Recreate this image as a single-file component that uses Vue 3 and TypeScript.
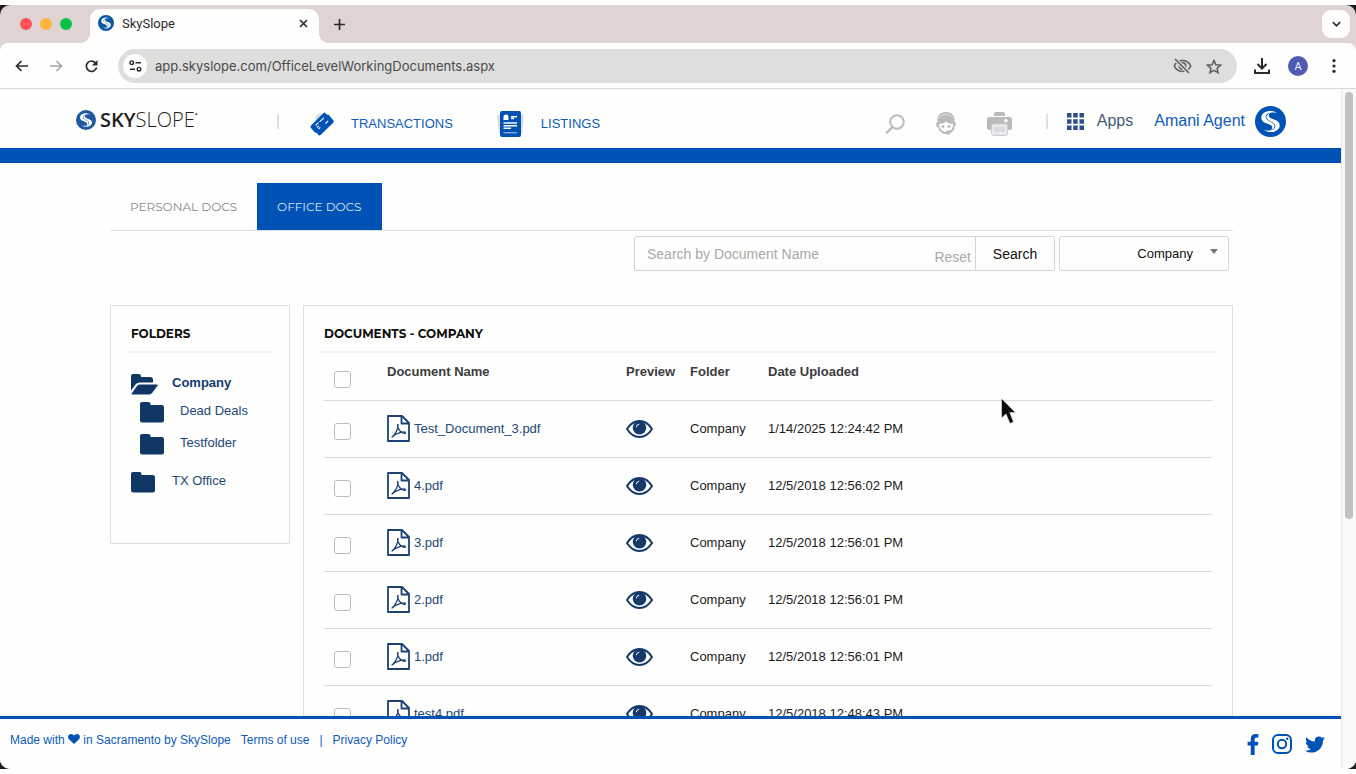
<script setup lang="ts">
import { ref } from 'vue'

interface DocumentRow {
  name: string
  folder: string
  uploaded: string
}

interface Folder {
  name: string
  open?: boolean
  nested?: boolean
}

const address = ref('app.skyslope.com/OfficeLevelWorkingDocuments.aspx')
const query = ref('')
const scope = ref('Company')

const folders: Folder[] = [
  { name: 'Company', open: true },
  { name: 'Dead Deals', nested: true },
  { name: 'Testfolder', nested: true },
  { name: 'TX Office' },
]

const documents: DocumentRow[] = [
  { name: 'Test_Document_3.pdf', folder: 'Company', uploaded: '1/14/2025 12:24:42 PM' },
  { name: '4.pdf', folder: 'Company', uploaded: '12/5/2018 12:56:02 PM' },
  { name: '3.pdf', folder: 'Company', uploaded: '12/5/2018 12:56:01 PM' },
  { name: '2.pdf', folder: 'Company', uploaded: '12/5/2018 12:56:01 PM' },
  { name: '1.pdf', folder: 'Company', uploaded: '12/5/2018 12:56:01 PM' },
  { name: 'test4.pdf', folder: 'Company', uploaded: '12/5/2018 12:48:43 PM' },
]
</script>

<template>
  <svg class="defs" aria-hidden="true">
    <symbol id="brand" viewBox="0 0 32 32">
      <circle cx="16" cy="16" r="16" />
      <g fill="#fefefd">
        <path id="swoosh" d="M23 7C15.500 3 6.500 6 6.500 12C6.500 17.500 13 17.500 16.500 19.800C18.500 21.200 18 23 16.500 24.800C20.500 23 21.500 19.800 18.500 17.800C15 15.400 11 14.600 11 11.200C11 7.400 17 5.800 23 7Z" />
        <use href="#swoosh" transform="rotate(180 16 16)" />
      </g>
    </symbol>
    <symbol id="folder" viewBox="0 0 24 21">
      <path d="M2 0H8.500Q10.500 0 10.500 2V3H21.500Q24 3 24 5.500V18Q24 20.500 21.500 20.500H2.500Q0 20.500 0 18V2Q0 0 2 0Z" />
    </symbol>
    <symbol id="folder-open" viewBox="0 0 27 21">
      <path d="M2 0H7.500Q10 0 10 2V3H19Q22 3 22 6V8.500H9Q6 8.500 4.500 10.500L0 16.500V2Q0 0 2 0Z" />
      <path d="M8.500 10.500H26Q27.300 10.500 26.500 11.800L21.500 18.500Q20 20.500 18 20.500H1.500Q0 20.500 1 19L6 12Q7 10.500 8.500 10.500Z" />
    </symbol>
    <symbol id="pdf" viewBox="0 0 23 27">
      <path d="M1 1H15L22 8V26H1ZM14.500 1V8.500H22" fill="none" stroke="currentColor" stroke-width="1.800" stroke-linejoin="round" />
      <path d="M5 22C8 20 11.500 13.500 11 9.500C10 9.500 10.500 15 15 17.500C17 18.600 18.500 18.600 18.500 17.800C18 16 9 17.500 5 22Z" fill="none" stroke="currentColor" stroke-width="1.300" stroke-linejoin="round" />
    </symbol>
    <symbol id="eye" viewBox="0 0 27 18">
      <path d="M1 9Q6 1 13.500 1T26 9Q21 17 13.500 17T1 9Z" fill="none" stroke="currentColor" stroke-width="2" />
      <circle cx="13.500" cy="7.800" r="6.800" />
      <path d="M10.300 6.800Q10.600 4.600 12.800 4.300" fill="none" stroke="#fefefd" stroke-width="1" stroke-linecap="round" />
    </symbol>
  </svg>

  <div class="desktop">
    <div class="window">
      <div class="tabstrip">
        <div class="lights"><i class="red"></i><i class="amber"></i><i class="green"></i></div>
        <div class="browser-tab">
          <svg class="favicon"><use href="#brand" /></svg>
          <span>SkySlope</span>
          <button class="bare close" aria-label="Close tab">
            <svg width="9" height="9" viewBox="0 0 9 9"><path d="M1 1L8 8M8 1L1 8" stroke="#2c2c2c" stroke-width="1.700" /></svg>
          </button>
        </div>
        <button class="bare new-tab" aria-label="New tab">
          <svg width="11" height="11" viewBox="0 0 11 11"><path d="M5.500 0V11M0 5.500H11" stroke="#2c2c2c" stroke-width="1.700" /></svg>
        </button>
        <button class="tab-search" aria-label="Search tabs">
          <svg width="9" height="6" viewBox="0 0 10 6"><path d="M1 1L5 5L9 1" fill="none" stroke="#2c2c2c" stroke-width="1.900" /></svg>
        </button>
      </div>

      <div class="toolbar">
        <button class="bare" aria-label="Back">
          <svg width="13" height="12" viewBox="0 0 13 12"><path d="M13 6H1.500M6.500 1L1.500 6L6.500 11" fill="none" stroke="#2c2c2c" stroke-width="1.700" /></svg>
        </button>
        <button class="bare" aria-label="Forward">
          <svg width="13" height="12" viewBox="0 0 13 12"><path d="M0 6H11.500M6.500 1L11.500 6L6.500 11" fill="none" stroke="#a3a3a3" stroke-width="1.500" /></svg>
        </button>
        <button class="bare" aria-label="Reload">
          <svg width="13" height="13" viewBox="0 0 13 13"><path d="M11 3.500A5.200 5.200 0 1 0 11.600 7.500" fill="none" stroke="#2c2c2c" stroke-width="1.700" /><path d="M12.500 0V5.500H7Z" fill="#2c2c2c" /></svg>
        </button>
        <div class="omnibox">
          <button class="site-info" aria-label="Site information">
            <svg width="13" height="12" viewBox="0 0 13 12" fill="none" stroke="#2c2c2c" stroke-width="1.400"><circle cx="2.700" cy="2.700" r="1.800" /><path d="M6.500 2.700H12M1 9.200H6" /><circle cx="10" cy="9.200" r="1.800" /></svg>
          </button>
          <input v-model="address" class="address" type="text" aria-label="Address" />
          <button class="bare" aria-label="Tracking protection">
            <svg width="19" height="16" viewBox="0 0 19 16" fill="none" stroke="#5c5c5c" stroke-width="1.600"><path d="M1.200 8Q4 2.500 9.500 2.500T17.800 8Q15 13.500 9.500 13.500T1.200 8Z" /><circle cx="9.500" cy="8" r="3.200" /><path d="M2 1L16 15" stroke="#dededd" stroke-width="4" /><path d="M2 1L16 15" /></svg>
          </button>
          <button class="bare" aria-label="Bookmark this tab">
            <svg width="16" height="15" viewBox="0 0 16 15"><path d="M8 1.500L9.900 5.700L14.500 6.200L11.100 9.200L12 13.700L8 11.400L4 13.700L4.900 9.200L1.500 6.200L6.100 5.700Z" fill="none" stroke="#5c5c5c" stroke-width="1.500" /></svg>
          </button>
        </div>
        <button class="bare" aria-label="Downloads">
          <svg width="16" height="16" viewBox="0 0 16 16" fill="none" stroke="#2c2c2c" stroke-width="2"><path d="M8 0V10M3.500 6L8 10.500L12.500 6M1 11.500V15H15V11.500" /></svg>
        </button>
        <button class="profile">A</button>
        <button class="bare" aria-label="Menu">
          <svg width="4" height="14" viewBox="0 0 4 14" fill="#2c2c2c"><circle cx="2" cy="1.700" r="1.600" /><circle cx="2" cy="7" r="1.600" /><circle cx="2" cy="12.300" r="1.600" /></svg>
        </button>
      </div>

      <div class="viewport">
        <div class="page">
          <header class="site-header">
            <a class="logo" href="#"><svg><use href="#brand" /></svg><b>SKY</b><span>SLOPE</span><sup>•</sup></a>
            <span class="divider"></span>
            <nav class="nav">
              <a href="#">
                <svg width="24" height="24" viewBox="0 0 24 24"><path d="M5 6Q8 0 12 2L18 5L8 14Z" fill="#d8dce2" /><path d="M13.500 1Q14.500 0 15.500 1.500Q16.800 3 18.500 2.500L23 8Q24.500 9.500 23 11L10.500 23Q9 24 8 22.500Q7.500 20.500 5 20.500L1 16Q0 14.500 1 13.500Z" fill="#0052b5" /><path d="M5.500 13.500L8.500 10.700M9.500 9.800L14 5.800M7 15.500L8.800 13.800M8.500 17L10.200 15.400M15.500 11.500L18.200 8.800" stroke="#fefefd" stroke-width="1.100" /></svg>
                TRANSACTIONS
              </a>
              <a href="#">
                <svg width="27" height="26" viewBox="0 0 27 26"><path d="M0 4L5 3V22L2 22ZM27 4L22 3V22L25 22Z" fill="#d9dbdf" /><rect x="3" width="21" height="26" rx="2" fill="#0052b5" /><path d="M6.500 9V5.500Q6.500 3.500 9 3.500T11.500 5.500V9Z" fill="#fefefd" /><path d="M14 5.800H20M14 7.500H17" stroke="#fefefd" stroke-width="1.400" /><path d="M6.500 12H20M6.500 14.800H20M6.500 17.300H14" stroke="#fefefd" stroke-width="1.600" /><path d="M6.500 21.800H20" stroke="#7ea8dc" stroke-width="1.500" /></svg>
                LISTINGS
              </a>
            </nav>
            <div class="tools">
              <button class="bare" aria-label="Search">
                <svg width="20" height="20" viewBox="0 0 20 20" fill="none" stroke="#b9bbbc" stroke-width="2"><circle cx="12" cy="8" r="6.800" /><path d="M7.500 13L1 19.300" stroke-width="2.400" /></svg>
              </button>
              <button class="bare" aria-label="Support">
                <svg width="22" height="23" viewBox="0 0 22 23"><path d="M2.500 10C1.500 3 6 0 11 0S20.500 3 19.500 10Q21 10 21 12T19 15Q18 20 12 22H9Q4 20 3 15Q1 15 1 12.500T2.500 10Z" fill="#b9bbbc" /><path d="M4 12Q9 11.500 11 9.500Q13 11.500 18 12Q18.500 17 14 19.300Q11 21 8 19.300Q4 17 4 12Z" fill="#fefefd" /><path d="M3 6.500Q6 2.500 11 2.500T19 6.500" fill="none" stroke="#dcdddf" /><circle cx="8" cy="14.500" r="1.400" fill="#b9bbbc" /><circle cx="14" cy="14.500" r="1.400" fill="#b9bbbc" /><path d="M19 15Q18 20.500 12.500 20.500" fill="none" stroke="#b9bbbc" stroke-width="1.500" /><rect x="10.500" y="18.500" width="5" height="4" rx="2" fill="#b9bbbc" /></svg>
              </button>
              <button class="bare" aria-label="Print">
                <svg width="25" height="24" viewBox="0 0 25 24"><path d="M7 4V2Q7 0 9 0H16Q18 0 18 2V4Z" fill="#b9bbbc" /><rect y="5" width="25" height="13" rx="2.500" fill="#b9bbbc" /><rect x="4.500" y="12" width="16" height="11.500" rx="2" fill="#e9eaec" stroke="#c9cbcc" /><path d="M7 15H18V20H7Z" fill="#d9dadd" /><circle cx="19" cy="8.800" r="1.700" fill="#fefefd" /></svg>
              </button>
            </div>
            <span class="divider"></span>
            <a class="apps" href="#">
              <svg width="17" height="17" viewBox="0 0 17 17" fill="#2c4f85"><path d="M0 0h4.500v4.500H0zM6.200 0h4.500v4.500H6.200zM12.500 0H17v4.500h-4.500zM0 6.200h4.500v4.500H0zM6.200 6.200h4.500v4.500H6.200zM12.500 6.200H17v4.500h-4.500zM0 12.500h4.500V17H0zM6.200 12.500h4.500V17H6.200zM12.500 12.500H17V17h-4.500z" /></svg>
              Apps
            </a>
            <a class="user" href="#">Amani Agent<svg><use href="#brand" /></svg></a>
          </header>
          <div class="band"></div>

          <main class="content">
            <nav class="tabs">
              <a href="#">PERSONAL DOCS</a>
              <a class="active" href="#">OFFICE DOCS</a>
            </nav>

            <form class="filters" @submit.prevent>
              <div class="search">
                <input v-model="query" type="text" placeholder="Search by Document Name" aria-label="Search by Document Name" />
                <button class="reset" type="reset">Reset</button>
                <button class="go" type="submit">Search</button>
              </div>
              <div class="select">
                <select v-model="scope" aria-label="Folder scope">
                  <option>Company</option>
                  <option>TX Office</option>
                </select>
                <svg width="8" height="5" viewBox="0 0 8 5"><path d="M0 0H8L4 5Z" fill="#777" /></svg>
              </div>
            </form>

            <div class="columns">
              <section class="panel folders">
                <h2>FOLDERS</h2>
                <ul>
                  <li v-for="f in folders" :key="f.name" :class="{ nested: f.nested, open: f.open }">
                    <a href="#">
                      <svg><use :href="f.open ? '#folder-open' : '#folder'" /></svg>
                      <span>{{ f.name }}</span>
                    </a>
                  </li>
                </ul>
              </section>

              <section class="panel documents">
                <h2>DOCUMENTS - COMPANY</h2>
                <table>
                  <colgroup>
                    <col class="c-check" /><col class="c-name" /><col class="c-preview" /><col class="c-folder" /><col />
                  </colgroup>
                  <thead>
                    <tr>
                      <th><input type="checkbox" aria-label="Select all documents" /></th>
                      <th>Document Name</th>
                      <th>Preview</th>
                      <th>Folder</th>
                      <th>Date Uploaded</th>
                    </tr>
                  </thead>
                  <tbody>
                    <tr v-for="d in documents" :key="d.name">
                      <td><input type="checkbox" :aria-label="'Select ' + d.name" /></td>
                      <td><a class="file" href="#"><svg><use href="#pdf" /></svg>{{ d.name }}</a></td>
                      <td><a class="preview" href="#" :aria-label="'Preview ' + d.name"><svg><use href="#eye" /></svg></a></td>
                      <td>{{ d.folder }}</td>
                      <td>{{ d.uploaded }}</td>
                    </tr>
                  </tbody>
                </table>
              </section>
            </div>
          </main>

          <footer class="site-footer">
            <span class="made">Made with
              <svg width="12" height="10" viewBox="0 0 12 10"><path d="M6 10L1 5.200C-1 3 .5 0 3 0Q5 0 6 1.600Q7 0 9 0C11.500 0 13 3 11 5.200Z" fill="#0052b5" /></svg>
              in Sacramento by SkySlope</span>
            <a href="#">Terms of use</a>
            <span>|</span>
            <a href="#">Privacy Policy</a>
            <div class="social">
              <a href="#" aria-label="Facebook"><svg width="12" height="21" viewBox="479 0 864 1664"><path d="M1343 12v264h-157q-86 0-116 36t-30 108v189h293l-39 296h-254v759h-306v-759h-255v-296h255v-218q0-186 104-288.500t277-102.500q147 0 228 12z" /></svg></a>
              <a href="#" aria-label="Instagram"><svg width="20" height="20" viewBox="0 0 20 20"><rect x="1" y="1" width="18" height="18" rx="5" fill="none" stroke="#0052b5" stroke-width="2" /><circle cx="10" cy="10" r="4.200" fill="none" stroke="#0052b5" stroke-width="2" /><circle cx="15.300" cy="4.700" r="1.200" /></svg></a>
              <a href="#" aria-label="Twitter"><svg width="20" height="17" viewBox="108 256 1576 1280"><path d="M1684 408q-67 98-162 167 1 14 1 42 0 130-38 259.500t-115.500 248.500-184.500 210.500-258 146-323 54.500q-271 0-496-145 35 4 78 4 225 0 401-138-105-2-188-64.500t-114-159.500q33 5 61 5 43 0 85-11-112-23-185.500-111.500t-73.500-205.500v-4q68 38 146 41-66-44-105-115t-39-154q0-88 44-163 121 149 294.500 238.500t371.500 99.500q-8-38-8-74 0-134 94.500-228.500t228.500-94.500q140 0 236 102 109-21 205-78-37 115-142 178 93-10 186-50z" /></svg></a>
            </div>
          </footer>
        </div>
        <div class="scrollbar"><div class="thumb"></div></div>
      </div>
    </div>

    <svg class="cursor" width="15" height="27" viewBox="0 0 15 27"><path d="M0.500 0.500V20L5 16L9 25.500L12.500 24L8.800 14.500H14.500Z" fill="#0b0b0b" stroke="#e8e8e8" stroke-width="0.600" /></svg>
  </div>
</template>

<style>
body {
  background: #fefefd;
}
</style>

<style scoped>
* {
  box-sizing: border-box;
}
a {
  color: inherit;
  text-decoration: none;
}
svg {
  display: block;
  flex: none;
}
button,
input,
select {
  font: inherit;
  color: inherit;
}
.defs {
  position: absolute;
  width: 0;
  height: 0;
}
.desktop {
  position: relative;
  height: 100vh;
  padding: 5px 0;
  background: linear-gradient(#1c1c1c, #1c1c1c) content-box;
  font-family: "Liberation Sans", Arial, sans-serif;
  font-size: 13px;
}
.window {
  height: 100%;
  display: flex;
  flex-direction: column;
  border-radius: 10px;
  overflow: hidden;
  background: #dfd4d3;
}
.bare {
  display: flex;
  padding: 0;
  border: 0;
  background: none;
}

/* Browser chrome */
.tabstrip {
  display: flex;
  align-items: center;
  height: 38px;
  padding: 0 6px 0 20px;
  font-family: Roboto, sans-serif;
  font-size: 13px;
  color: #2c2c2c;
}
.lights {
  display: flex;
  gap: 8px;
  width: 70px;
}
.lights i {
  width: 12px;
  height: 12px;
  border-radius: 50%;
}
.red {
  background: #ff5355;
}
.amber {
  background: #ffb53d;
}
.green {
  background: #0bc146;
}
.browser-tab {
  position: relative;
  align-self: flex-end;
  display: flex;
  align-items: center;
  gap: 8px;
  width: 229px;
  height: 34px;
  padding: 0 11px 6px 8px;
  border-radius: 10px 10px 0 0;
  background: #fefefd;
}
.browser-tab::before,
.browser-tab::after {
  content: "";
  position: absolute;
  bottom: 0;
  width: 10px;
  height: 10px;
}
.browser-tab::before {
  right: 100%;
  background: radial-gradient(circle at 0 0, transparent 10px, #fefefd 10px);
}
.browser-tab::after {
  left: 100%;
  background: radial-gradient(circle at 100% 0, transparent 10px, #fefefd 10px);
}
.favicon {
  width: 16px;
  height: 16px;
  fill: #0b57a4;
}
.close {
  margin-left: auto;
}
.new-tab {
  margin-left: 15px;
}
.tab-search {
  display: flex;
  align-items: center;
  justify-content: center;
  width: 28px;
  height: 28px;
  margin-left: auto;
  padding: 0;
  border: 0;
  border-radius: 9px;
  background: #fefefd;
}
.toolbar {
  display: flex;
  align-items: center;
  gap: 22px;
  height: 46px;
  padding: 1px 20px 0 15px;
  border-bottom: 1px solid #d6d6d8;
  border-radius: 8px 8px 0 0;
  background: #fefefd;
}
.omnibox {
  flex: 1;
  display: flex;
  align-items: center;
  gap: 14px;
  height: 34px;
  margin-right: -5px;
  margin-left: -2px;
  padding: 0 15px 0 5px;
  border-radius: 17px;
  background: #dededd;
  font-family: Inter, sans-serif;
  font-size: 13px;
}
.site-info {
  display: flex;
  align-items: center;
  justify-content: center;
  width: 24px;
  height: 24px;
  padding: 0;
  border: 0;
  border-radius: 50%;
  background: #fefefd;
}
.address {
  flex: 1;
  min-width: 0;
  margin-left: -6px;
  padding: 0;
  border: 0;
  outline: 0;
  background: none;
  color: #4a4a4b;
}
.profile {
  width: 20px;
  height: 20px;
  margin-right: 2px;
  margin-left: -4px;
  padding: 0;
  border: 0;
  border-radius: 50%;
  background: #4f5bb3;
  color: #f2f2fa;
  font-family: Roboto, sans-serif;
  font-size: 11px;
}

/* Page shell */
.viewport {
  flex: 1;
  min-height: 0;
  display: flex;
  background: #fefefd;
}
.page {
  flex: 1;
  min-width: 0;
  display: flex;
  flex-direction: column;
}
.scrollbar {
  width: 15px;
  padding: 3px 3px 0;
  border-left: 1px solid #e8e8ea;
  background: #fafafc;
}
.thumb {
  height: 63%;
  border-radius: 4px;
  background: #c1c1c1;
}

/* Header */
.site-header {
  flex: none;
  display: flex;
  align-items: center;
  height: 59px;
  padding: 5px 55px 0 76px;
  color: #0f5bb9;
}
.logo {
  display: flex;
  align-items: center;
  width: 201px;
  padding-bottom: 3px;
  color: #1f1f22;
  font-family: "Open Sans", sans-serif;
  font-size: 20px;
  line-height: 20px;
}
.logo svg {
  width: 20px;
  height: 20px;
  margin-right: 4px;
  fill: #2258a0;
}
.logo b {
  font-weight: 600;
}
.logo span {
  font-weight: 300;
}
.logo sup {
  align-self: flex-start;
  font-size: 8px;
  line-height: 8px;
}
.divider {
  width: 2px;
  height: 15px;
  background: #e0e0e4;
}
.nav {
  display: flex;
  gap: 44px;
  margin-left: 31px;
  padding-top: 5px;
}
.nav a {
  display: flex;
  align-items: center;
  gap: 17px;
}
.tools {
  display: flex;
  align-items: center;
  gap: 30px;
  margin-right: 34px;
  margin-left: auto;
  padding-top: 5px;
}
.apps {
  display: flex;
  align-items: center;
  gap: 13px;
  margin-left: 19px;
  color: #42597c;
  font-size: 16px;
}
.user {
  display: flex;
  align-items: center;
  gap: 10px;
  margin-left: 21px;
  font-size: 16px;
}
.user svg {
  width: 31px;
  height: 31px;
  fill: #0052b5;
}
.band {
  flex: none;
  height: 15px;
  background: #0052b5;
}

/* Content */
.content {
  flex: 1;
  min-height: 0;
  overflow: hidden;
  padding: 20px 108px 0 110px;
}
.tabs {
  display: flex;
  border-bottom: 1px solid #dfe0e2;
  font-family: Montserrat, Inter, sans-serif;
  font-size: 12px;
}
.tabs a {
  padding: 0 20px;
  line-height: 47px;
  color: #8a8a8a;
}
.tabs .active {
  background: #0052b5;
  color: #d6e4f5;
}
.filters {
  display: flex;
  justify-content: flex-end;
  gap: 4px;
  margin-top: 5px;
  padding-right: 4px;
}
.search {
  display: flex;
  width: 421px;
  height: 35px;
  border: 1px solid #d3d4da;
  border-radius: 2px;
  font-size: 14px;
}
.search input {
  flex: 1;
  min-width: 0;
  padding: 0 12px;
  border: 0;
  outline: 0;
  background: none;
}
.search input::placeholder {
  color: #a9a9a9;
}
.reset,
.go {
  padding: 0;
  border: 0;
  background: none;
}
.reset {
  padding: 7px 4px 0 0;
  color: #a9a9a9;
}
.go {
  width: 79px;
  border-left: 1px solid #d3d4da;
  color: #111;
}
.select {
  position: relative;
  width: 170px;
}
.select select {
  width: 100%;
  height: 35px;
  padding: 0 35px 0 10px;
  border: 1px solid #d3d4da;
  border-radius: 2px;
  appearance: none;
  background: none;
  color: #111;
  text-align: right;
  text-align-last: right;
}
.select svg {
  position: absolute;
  top: 13px;
  right: 11px;
}
.columns {
  display: flex;
  align-items: flex-start;
  gap: 13px;
  margin-top: 34px;
}
.panel {
  padding: 0 16px;
  border: 1px solid #dedfe4;
}
.panel h2 {
  margin: 0;
  padding: 18px 4px 8px;
  border-bottom: 2px solid #f5f5f5;
  font-family: Montserrat, Inter, sans-serif;
  font-size: 12px;
  font-weight: 700;
  line-height: 19px;
  color: #0e0e0e;
}
.folders {
  width: 180px;
  min-height: 239px;
}
.folders ul {
  margin: 0;
  padding: 16px 0 0 4px;
  list-style: none;
  color: #234878;
}
.folders li {
  height: 38px;
}
.folders a {
  display: flex;
  align-items: flex-start;
  line-height: 28px;
}
.folders svg {
  width: 24px;
  height: 21px;
  margin: 5px 17px 0 0;
  fill: #0f3664;
}
.folders .open {
  height: 28px;
  font-weight: 700;
  color: #123c70;
}
.folders .open svg {
  width: 27px;
  margin-right: 14px;
}
.folders .nested {
  height: 32px;
  padding-left: 9px;
}
.folders .nested svg {
  margin-right: 16px;
}
.folders .nested + li:not(.nested) {
  margin-top: 6px;
}
.documents {
  flex: 1;
}
table {
  width: calc(100% - 8px);
  margin: 0 4px;
  border-collapse: collapse;
  table-layout: fixed;
}
.c-check {
  width: 63px;
}
.c-name {
  width: 239px;
}
.c-preview {
  width: 64px;
}
.c-folder {
  width: 78px;
}
th,
td {
  padding: 0;
  border-bottom: 1px solid #d9dade;
  text-align: left;
}
th {
  height: 47px;
  padding-bottom: 9px;
  color: #3c3c3f;
}
th:first-child {
  padding: 6px 0 0;
}
td {
  height: 57px;
  color: #1c1c1e;
}
td:first-child {
  padding-top: 6px;
}
input[type="checkbox"] {
  display: block;
  width: 17px;
  height: 17px;
  margin: 0 0 0 10px;
  border: 1px solid #bcbcc0;
  border-radius: 3px;
  appearance: none;
  background: #fefefd;
}
.file {
  display: flex;
  align-items: center;
  gap: 4px;
  color: #234878;
}
.file svg {
  width: 23px;
  height: 27px;
  color: #1b4273;
}
.preview svg {
  width: 27px;
  height: 18px;
  color: #14396a;
  fill: #14396a;
}

/* Footer */
.site-footer {
  flex: none;
  display: flex;
  align-items: center;
  gap: 10px;
  height: 53px;
  padding: 0 16px 8px 10px;
  border-top: 3px solid #0052b5;
  font-size: 12px;
  color: #0f5bb9;
}
.made svg {
  display: inline-block;
}
.social {
  display: flex;
  align-items: center;
  gap: 13px;
  margin-left: auto;
  padding-top: 8px;
  fill: #0052b5;
}

.cursor {
  position: absolute;
  top: 398px;
  left: 1001px;
}
</style>
